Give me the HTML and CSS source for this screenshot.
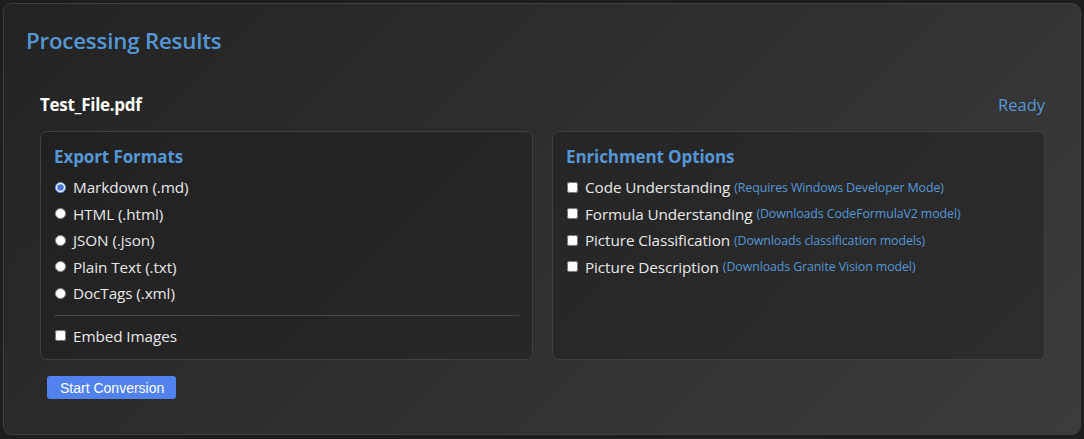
FILE: index.html
```html
<!DOCTYPE html>
<html lang="en">
<head>
<meta charset="utf-8">
<title>Processing Results</title>
<link rel="stylesheet" href="styles.css">
</head>
<body>
<div class="card">
  <h1 class="title">Processing Results</h1>
  <div class="inner">
    <div class="file-row">
      <span class="file-name">Test_File.pdf</span>
      <span class="status">Ready</span>
    </div>
    <div class="panels">
      <section class="panel">
        <h2 class="panel-title">Export Formats</h2>
        <label class="opt"><input type="radio" name="fmt" checked> Markdown (.md)</label>
        <label class="opt"><input type="radio" name="fmt"> HTML (.html)</label>
        <label class="opt"><input type="radio" name="fmt"> JSON (.json)</label>
        <label class="opt"><input type="radio" name="fmt"> Plain Text (.txt)</label>
        <label class="opt"><input type="radio" name="fmt"> DocTags (.xml)</label>
        <div class="sep"></div>
        <label class="opt"><input type="checkbox"> Embed Images</label>
      </section>
      <section class="panel">
        <h2 class="panel-title">Enrichment Options</h2>
        <label class="opt"><input type="checkbox"> Code Understanding <span class="hint">(Requires Windows Developer Mode)</span></label>
        <label class="opt"><input type="checkbox"> Formula Understanding <span class="hint">(Downloads CodeFormulaV2 model)</span></label>
        <label class="opt"><input type="checkbox"> Picture Classification <span class="hint">(Downloads classification models)</span></label>
        <label class="opt"><input type="checkbox"> Picture Description <span class="hint">(Downloads Granite Vision model)</span></label>
      </section>
    </div>
    <button class="btn">Start Conversion</button>
  </div>
</div>
</body>
</html>
```
FILE: styles.css
```css
html, body {
  margin: 0;
  padding: 0;
  background: #1e1e1e;
}
body {
  padding: 3px;
  font-family: "Open Sans", "Noto Sans", sans-serif;
  color: #e6e6e6;
}
.card {
  box-sizing: border-box;
  width: 1078px;
  height: 432px;
  border: 1px solid #3e3e3e;
  border-radius: 9px;
  background: linear-gradient(135deg, #232323 0%, #2e2e2e 45%, #3c3c3c 100%);
  padding: 22px 21px 0 22px;
}
.title {
  margin: 0;
  font-size: 22.3px;
  font-weight: 600;
  color: #5597d6;
  line-height: 30px;
  letter-spacing: -0.2px;
}
.inner {
  padding: 0 14px;
}
.file-row {
  display: flex;
  justify-content: space-between;
  align-items: center;
  margin-top: 35px;
  height: 26px;
}
.file-name {
  font-size: 17px;
  font-weight: 700;
  color: #ffffff;
  letter-spacing: -0.3px;
}
.status {
  font-size: 16.5px;
  color: #5597d6;
}
.panels {
  display: grid;
  grid-template-columns: 1fr 1fr;
  gap: 19px;
  margin-top: 14px;
}
.panel {
  box-sizing: border-box;
  height: 229px;
  background: rgba(28, 28, 28, 0.45);
  border: 1px solid #404040;
  border-radius: 7px;
  padding: 13px 13px 0 13px;
}
.panel-title {
  margin: 0 0 5px 0;
  font-size: 17px;
  font-weight: 700;
  color: #5597d6;
  line-height: 24px;
  letter-spacing: -0.1px;
}
.opt {
  display: flex;
  align-items: center;
  height: 26.5px;
  font-size: 15.3px;
  color: #e8e8e8;
  letter-spacing: -0.1px;
  white-space: nowrap;
}
.opt input {
  margin: 0 7px 0 1px;
  width: 11px;
  height: 11px;
  accent-color: #4a78d6;
}
.hint {
  font-size: 12.4px;
  color: #5597d6;
  margin-left: 4px;
  letter-spacing: -0.1px;
}
.sep {
  height: 1px;
  background: #474747;
  margin: 8px 0 7px 0;
}
.btn {
  margin: 16px 0 0 7px;
  height: 23px;
  padding: 0 12px 0 13px;
  background: #5282ee;
  color: #ffffff;
  border: none;
  border-radius: 3px;
  font-family: "Liberation Sans", Arial, sans-serif;
  font-size: 14px;
  cursor: pointer;
}
```
